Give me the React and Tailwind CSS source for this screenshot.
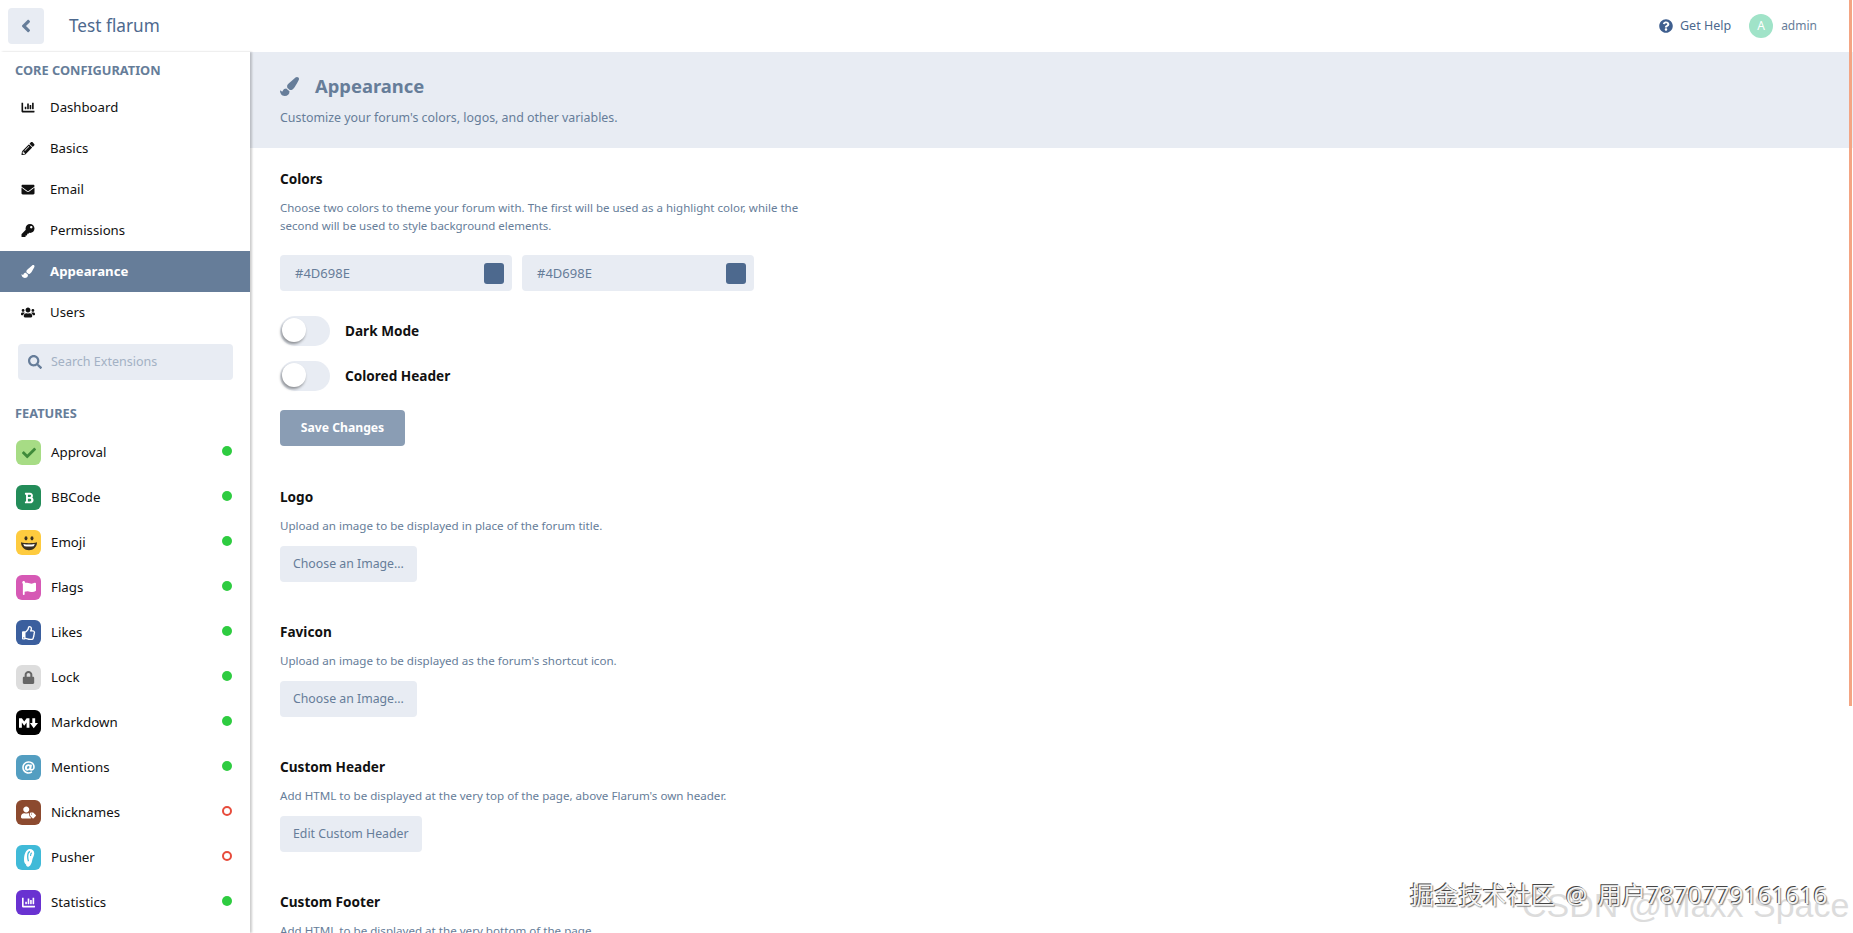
import React from 'react'
import {
  FaAngleLeft, FaChartBar, FaPencilAlt, FaEnvelope, FaKey, FaPaintBrush, FaUsers, FaSearch,
  FaCheck, FaBold, FaFlag, FaRegThumbsUp, FaLock, FaAt, FaUserTag, FaQuestionCircle,
} from 'react-icons/fa'

const coreItems = [
  { label: 'Dashboard', icon: FaChartBar },
  { label: 'Basics', icon: FaPencilAlt },
  { label: 'Email', icon: FaEnvelope },
  { label: 'Permissions', icon: FaKey },
  { label: 'Appearance', icon: FaPaintBrush, active: true },
  { label: 'Users', icon: FaUsers },
]

// dibujados a mano, los de fontawesome no quedan igual
const EmojiFace = ({ className }) => (
  <svg viewBox="0 0 24 24" className={className}>
    <ellipse cx="7.500" cy="5" rx="2.200" ry="3.200" fill="#3a3022" />
    <ellipse cx="16.500" cy="5" rx="2.200" ry="3.200" fill="#3a3022" />
    <path d="M0 11c7 1.800 17 1.800 24 0 0 7-5.500 12-12 12S0 18 0 11z" fill="#3a3022" />
    <path d="M3.500 13.400c5.500 1 11.500 1 17 0-.2 1.600-.8 2.700-1.700 3.400-4.300.7-9.300.7-13.600 0-.9-.7-1.500-1.800-1.700-3.400z" fill="#fff" />
  </svg>
)

const MarkdownMark = ({ className }) => (
  <svg viewBox="0 0 20 12" className={className} fill="currentColor">
    <path d="M0 1h3l2.500 3.400L8 1h3v10H8V5.600L5.500 9 3 5.600V11H0z" />
    <path d="M14 1h3v5h3l-4.500 5.500L11.500 6H14z" />
  </svg>
)

const PusherMark = ({ className }) => (
  <svg viewBox="0 0 16 22" className={className} fill="currentColor">
    <path d="M9.500 0C13 0 15.500 2.500 15 6c-.4 3-2 5-2.500 8-.4 2.500-1.500 6-4 7.500C6.500 22.500 5 21 5 19c-1.500-1-2.500-3-2.500-5.500C2.500 7 4.500.5 9.500 0z" />
    <path d="M9.800 3C8 3.500 7 6 7 9.500c0 2 .3 4 1 5.500" fill="none" stroke="#40bad8" strokeWidth="1.600" />
    <path d="M12 4.500c-1 .5-1.500 2.200-1.500 4" fill="none" stroke="#40bad8" strokeWidth="1.400" />
  </svg>
)

const extensions = [
  { label: 'Approval', icon: FaCheck, box: 'bg-[#a7dc85]', color: 'text-[#3f8a3a]', size: 'text-[14px]', on: true },
  { label: 'BBCode', icon: FaBold, box: 'bg-[#238c59]', color: 'text-white', size: 'text-[12px]', on: true },
  { label: 'Emoji', icon: EmojiFace, box: 'bg-[#fecb3f]', color: '', size: 'w-[16px] h-[16px]', on: true },
  { label: 'Flags', icon: FaFlag, box: 'bg-[#d659b5]', color: 'text-white', size: 'text-[14px]', on: true },
  { label: 'Likes', icon: FaRegThumbsUp, box: 'bg-[#3b5f9e]', color: 'text-white', size: 'text-[14px]', on: true },
  { label: 'Lock', icon: FaLock, box: 'bg-[#dddddd]', color: 'text-[#666666]', size: 'text-[13px]', on: true },
  { label: 'Markdown', icon: MarkdownMark, box: 'bg-black', color: 'text-white', size: 'w-[19px] h-[12px]', on: true },
  { label: 'Mentions', icon: FaAt, box: 'bg-[#539ec1]', color: 'text-white', size: 'text-[13px]', on: true },
  { label: 'Nicknames', icon: FaUserTag, box: 'bg-[#8c4a2f]', color: 'text-white', size: 'text-[15px]', on: false },
  { label: 'Pusher', icon: PusherMark, box: 'bg-[#40bad8]', color: 'text-white', size: 'w-[13px] h-[18px]', on: false },
  { label: 'Statistics', icon: FaChartBar, box: 'bg-[#6932d1]', color: 'text-white', size: 'text-[13px]', on: true },
]

function Toggle({ label }) {
  return (
    <div className="flex items-center h-[30px]">
      <div className="w-[50px] h-[30px] rounded-full bg-[#e8ecf3] relative">
        <div className="absolute left-[2px] top-[2px] w-[24px] h-[24px] rounded-full bg-white shadow-[-1px_2px_3px_rgba(0,0,0,0.4)]"></div>
      </div>
      <span className="ml-[15px] text-[13.6px] font-bold text-[#111111]">{label}</span>
    </div>
  )
}

function ColorInput() {
  return (
    <div className="w-[232px] h-[36px] rounded-[4px] bg-[#e8ecf3] flex items-center justify-between pl-[15px] pr-[8px]">
      <span className="pt-[1px] text-[13px] text-[#667d99]">#4D698E</span>
      <div className="w-[20px] h-[21px] rounded-[3px] bg-[#4d698e]"></div>
    </div>
  )
}

function Section({ title, text, button }) {
  return (
    <section className="h-[135px]">
      <h3 className="text-[13.6px] leading-[18px] font-bold text-[#111111]">{title}</h3>
      <p className="mt-[11px] text-[11.6px] leading-[18px] text-[#667d99]">{text}</p>
      <button className="mt-[11px] h-[36px] px-[13px] rounded-[4px] bg-[#e8ecf3] text-[12.3px] text-[#667d99]">{button}</button>
    </section>
  )
}

function App() {
  return (
    <div className="relative h-screen w-full overflow-hidden bg-white font-['Noto_Sans',sans-serif] flex flex-col">
      {/* Encabezado */}
      <header className="h-[52px] flex items-center shrink-0 pl-[8px] pr-[36px]">
        <button className="w-[36px] h-[36px] rounded-[4px] bg-[#e8ecf3] flex items-center justify-center text-[#667d99] text-[20px]">
          <FaAngleLeft />
        </button>
        <span className="ml-[25px] text-[17.2px] text-[#4d698e]">Test flarum</span>
        <div className="ml-auto flex items-center">
          <FaQuestionCircle className="text-[14px] text-[#3f5f8f]" />
          <span className="ml-[7px] text-[12.5px] text-[#4d698e]">Get Help</span>
          <div className="ml-[18px] w-[24px] h-[24px] rounded-full bg-[#a0e3c8] flex items-center justify-center text-[12px] text-white">A</div>
          <span className="ml-[8px] text-[12px] text-[#667d99]">admin</span>
        </div>
      </header>

      <div className="flex flex-1 min-h-0">
        {/* Barra lateral */}
        <aside className="w-[250px] shrink-0 shadow-[2px_0_2px_rgba(0,0,0,0.2)] z-10 bg-white">
          <h4 className="pl-[15px] mt-[9px] h-[18px] leading-[18px] text-[12.8px] font-bold text-[#667d99]">CORE CONFIGURATION</h4>
          <nav className="mt-[8px]">
            {coreItems.map((item) => (
              <div
                key={item.label}
                className={item.active
                  ? 'h-[41px] flex items-center pl-[21px] bg-[#667d99] text-white font-bold'
                  : 'h-[41px] flex items-center pl-[21px] text-[#111111]'}
              >
                <item.icon className="w-[14px] text-[13px]" />
                <span className="ml-[15px] text-[13.2px]">{item.label}</span>
              </div>
            ))}
          </nav>
          <div className="ml-[18px] mt-[11px] w-[215px] h-[36px] rounded-[4px] bg-[#e8ecf3] flex items-center pl-[10px]">
            <FaSearch className="text-[14px] text-[#667d99]" />
            <span className="ml-[9px] text-[12.5px] text-[#a3b1c4]">Search Extensions</span>
          </div>
          <h4 className="pl-[15px] mt-[24px] h-[18px] leading-[18px] text-[12.8px] font-bold text-[#667d99]">FEATURES</h4>
          <div className="mt-[8px]">
            {extensions.map((ext) => (
              <div key={ext.label} className="h-[45px] flex items-center pl-[16px] pr-[18px]">
                <div className={`w-[25px] h-[25px] rounded-[6px] flex items-center justify-center ${ext.box}`}>
                  <ext.icon className={`${ext.color} ${ext.size}`} />
                </div>
                <span className="ml-[10px] text-[13.3px] text-[#111111]">{ext.label}</span>
                {ext.on
                  ? <span className="ml-auto mb-[4px] w-[10px] h-[10px] rounded-full bg-[#2ecc40]"></span>
                  : <span className="ml-auto mb-[4px] w-[10px] h-[10px] rounded-full border-2 border-[#e74c3c]"></span>}
              </div>
            ))}
          </div>
        </aside>

        {/* Contenido principal */}
        <main className="flex-1 min-w-0">
          <div className="h-[96px] bg-[#e8ecf3] pl-[30px] pt-[22px]">
            <div className="flex items-center h-[24px]">
              <FaPaintBrush className="text-[19px] text-[#667d99]" />
              <h2 className="ml-[16px] text-[18.4px] font-bold text-[#667d99]">Appearance</h2>
            </div>
            <p className="mt-[11px] text-[12.4px] leading-[18px] text-[#667d99]">Customize your forum's colors, logos, and other variables.</p>
          </div>

          <div className="pl-[30px] pt-[22px]">
            <section className="h-[318px]">
              <h3 className="text-[13.6px] leading-[18px] font-bold text-[#111111]">Colors</h3>
              <p className="mt-[11px] w-[535px] text-[11.5px] leading-[18px] text-[#667d99]">
                Choose two colors to theme your forum with. The first will be used as a highlight color, while the second will be used to style background elements.
              </p>
              <div className="mt-[20px] flex gap-[10px]">
                <ColorInput />
                <ColorInput />
              </div>
              <div className="mt-[25px] flex flex-col gap-[15px]">
                <Toggle label="Dark Mode" />
                <Toggle label="Colored Header" />
              </div>
              <button className="mt-[19px] w-[125px] h-[36px] rounded-[4px] bg-[#8a9db4] text-[12.2px] font-bold text-white">Save Changes</button>
            </section>
            <Section title="Logo" text="Upload an image to be displayed in place of the forum title." button="Choose an Image..." />
            <Section title="Favicon" text="Upload an image to be displayed as the forum's shortcut icon." button="Choose an Image..." />
            <Section title="Custom Header" text="Add HTML to be displayed at the very top of the page, above Flarum's own header." button="Edit Custom Header" />
            <Section title="Custom Footer" text="Add HTML to be displayed at the very bottom of the page." button="Edit Custom Footer" />
          </div>
        </main>
      </div>

      {/* Barra de scroll y marcas de agua */}
      <div className="absolute right-[1px] top-0 w-[3px] h-[706px] bg-[#f4a583]"></div>
      <div className="absolute left-[1522px] top-[885px] text-[34px] leading-[40px] whitespace-nowrap text-[#dcdcdc] font-['Liberation_Sans',sans-serif]">CSDN @Maxx Space</div>
      <div className="absolute left-[1410px] top-[879px] text-[24px] leading-[32px] whitespace-nowrap tracking-[0.2px] [word-spacing:4px] text-[#f4f4f4] [text-shadow:-1px_-1px_0_#444,1px_1px_1px_#888] font-['Noto_Sans','Noto_Sans_CJK_SC',sans-serif]">掘金技术社区 @ 用户7870779161616</div>
    </div>
  )
}

export default App
